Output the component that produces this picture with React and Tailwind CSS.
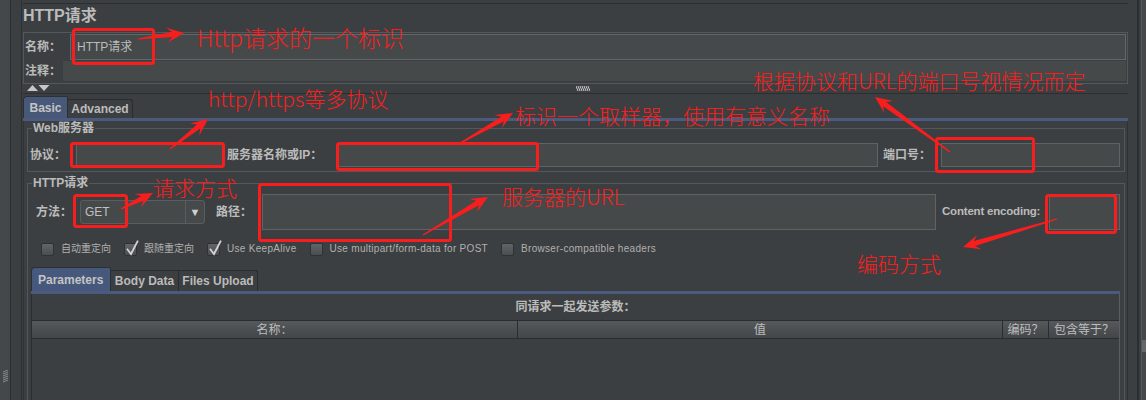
import React from 'react';

const RED = '#f81e1e';

function arrowPoints(t, p, headLen = 17, headHalf = 7.5, shaftHalf = 2.6) {
  const dx = p[0] - t[0];
  const dy = p[1] - t[1];
  const len = Math.hypot(dx, dy);
  const ux = dx / len;
  const uy = dy / len;
  const nx = -uy;
  const ny = ux;
  const jx = p[0] - ux * (headLen - 5);
  const jy = p[1] - uy * (headLen - 5);
  const bx = p[0] - ux * headLen;
  const by = p[1] - uy * headLen;
  const pts = [
    [t[0] + nx * 0.6, t[1] + ny * 0.6],
    [jx + nx * shaftHalf, jy + ny * shaftHalf],
    [bx + nx * headHalf, by + ny * headHalf],
    [p[0], p[1]],
    [bx - nx * headHalf, by - ny * headHalf],
    [jx - nx * shaftHalf, jy - ny * shaftHalf],
    [t[0] - nx * 0.6, t[1] - ny * 0.6],
  ];
  return pts.map((q) => `${q[0].toFixed(1)},${q[1].toFixed(1)}`).join(' ');
}

const ARROWS = [
  [[138, 39], [184, 33]],
  [[170, 149], [208, 119]],
  [[457, 145], [513, 113]],
  [[950, 152], [875, 97]],
  [[121, 209], [153, 193]],
  [[423, 235], [488, 197]],
  [[1057, 219], [963, 247]],
];

const BOXES = [
  [72, 28, 155, 65],
  [70, 142, 225, 168],
  [336, 142, 539, 171],
  [935, 137, 1035, 173],
  [73, 194, 128, 228],
  [258, 183, 452, 242],
  [1045, 194, 1117, 234],
];

function Checkbox({ checked, label, latin }) {
  return (
    <div className="flex items-center ml-[13px]">
      <span className="relative w-[13px] h-[13px] shrink-0 rounded-[2px] border border-[#2f3234] bg-linear-to-b from-[#626567] to-[#4b4e50]">
        {checked && (
          <svg className="absolute left-[0px] top-[-4px]" width="15" height="16" viewBox="0 0 15 16">
            <path d="M2.5 9.5 L6 14 L12.5 1.5" fill="none" stroke="#d4d4d4" strokeWidth="1.8" strokeLinecap="square" />
          </svg>
        )}
      </span>
      <span
        className={
          latin
            ? 'ml-[7px] text-[10px] leading-none text-[#b0b0b0] whitespace-nowrap tracking-[0.3px]'
            : 'ml-[7px] text-[10px] leading-none text-[#b0b0b0] whitespace-nowrap'
        }
      >
        {label}
      </span>
    </div>
  );
}

const NOTE = "absolute leading-none text-[#f81e1e] font-light font-['Noto_Sans_CJK_SC',sans-serif] whitespace-nowrap";

export default function App() {
  return (
    <div className="relative w-[1146px] h-[400px] overflow-hidden bg-[#3c3f41] flex font-['Liberation_Sans','Noto_Sans_CJK_SC',sans-serif]">
      {/* left strip */}
      <div className="w-[10px] h-[400px] bg-[#45484a] shrink-0 flex flex-col">
        <svg className="mt-[370px] ml-[3px]" width="6" height="13" viewBox="0 0 6 13">
          {[0, 2, 4, 6, 8, 10].map((y) => (
            <path key={y} d={`M0 ${y + 2} L5 ${y}`} stroke="#9a9d9f" strokeWidth="0.8" />
          ))}
        </svg>
      </div>
      <div className="w-[1px] h-[400px] bg-[#2b2d2f] shrink-0" />
      <div className="w-[10px] shrink-0" />
      <div className="w-[1px] h-[400px] bg-[#2e3032] shrink-0" />
      <div className="w-[1px] shrink-0" />

      {/* main column */}
      <div className="w-[1105px] h-[400px] shrink-0 flex flex-col">
        <div className="h-[3px] shrink-0" />
        <div className="h-[29px] shrink-0 border-t border-[#2c2e30] pt-[2px] text-[16px] font-bold leading-[20px] text-[#bbbbbb]">
          HTTP请求
        </div>

        {/* name / comment box */}
        <div className="h-[52px] shrink-0 border border-[#55585a] flex flex-col">
          <div className="h-[27px] flex items-start">
            <div className="w-[46px] h-[27px] pl-[1px] flex items-center text-[12px] font-bold text-[#bbbbbb]">名称：</div>
            <div className="flex-1 mr-[1px] mt-[1px] h-[26px] bg-[#45494a] border border-[#646769] flex items-center pl-[6px] text-[12px] text-[#bbbbbb]">
              HTTP请求
            </div>
          </div>
          <div className="h-[23px] flex items-start">
            <div className="w-[39px] h-[22px] pl-[1px] flex items-center text-[12px] font-bold text-[#bbbbbb]">注释：</div>
            <div className="flex-1 mr-[1px] mt-[1px] h-[20px] bg-[#45494a]" />
          </div>
        </div>

        {/* splitter */}
        <div className="h-[10px] shrink-0 border-b border-[#2c2e30] flex items-start">
          <svg className="ml-[4px] mt-[1px]" width="23" height="7" viewBox="0 0 23 7">
            <path d="M0 6 L5.5 0 L11 6 Z" fill="#c6c6c6" />
            <path d="M11.5 0 L22.5 0 L17 6 Z" fill="#c6c6c6" />
          </svg>
          <svg className="ml-[526px] mt-[2px]" width="14" height="5" viewBox="0 0 14 5">
            {[0, 2, 4, 6, 8, 10, 12].map((x) => (
              <path key={x} d={`M${x} 0 L${x + 2} 5`} stroke="#d8d8d8" strokeWidth="0.9" />
            ))}
          </svg>
        </div>

        {/* Basic / Advanced tabs */}
        <div className="h-[2px] shrink-0" />
        <div className="h-[22px] shrink-0 flex items-end">
          <div className="w-[45px] h-[22px] bg-[#485879] border border-b-0 border-[#2d3033] rounded-tl-[4px] rounded-tr-[2px] flex items-center justify-center text-[12px] font-bold text-[#c4c4c4]">
            Basic
          </div>
          <div className="w-[65px] h-[19px] border border-b-0 border-l-0 border-[#2a2c2e] rounded-tr-[3px] flex items-center justify-center text-[12px] font-bold text-[#bbbbbb]">
            Advanced
          </div>
        </div>
        <div className="h-[3px] shrink-0 bg-[#4a5b7e]" />

        {/* tab panel */}
        <div className="flex-1 min-h-0 border-x border-[#2f3234] pl-[3px] pr-[2px] flex flex-col">
          {/* Web server group */}
          <fieldset className="border border-[#55585a] min-w-0">
            <legend className="ml-[4px] px-[1px] text-[12px] font-bold leading-[14px] text-[#bbbbbb]">Web服务器</legend>
            <div className="mt-[8px] mb-[4px] h-[24px] flex items-center text-[12px] font-bold text-[#bbbbbb]">
              <div className="w-[48px] pl-[2px] whitespace-nowrap">协议：</div>
              <div className="w-[147px] h-[24px] bg-[#45494a] border border-[#5f6365]" />
              <div className="w-[114px] pl-[4px] whitespace-nowrap">服务器名称或IP：</div>
              <div className="flex-1 h-[24px] bg-[#45494a] border border-[#5f6365]" />
              <div className="w-[63px] pl-[5px] whitespace-nowrap">端口号：</div>
              <div className="w-[179px] h-[24px] bg-[#45494a] border border-[#5f6365]" />
              <div className="w-[4px]" />
            </div>
          </fieldset>

          {/* HTTP request group */}
          <fieldset className="mt-[4px] border border-[#55585a] min-w-0 flex-1">
            <legend className="ml-[4px] px-[1px] text-[12px] font-bold leading-[14px] text-[#bbbbbb]">HTTP请求</legend>
            <div className="mt-[4px] h-[36px] flex items-center text-[12px] font-bold text-[#bbbbbb]">
              <div className="w-[52px] pl-[8px] whitespace-nowrap">方法：</div>
              <div className="w-[125px] h-[24px] bg-[#45494a] border border-[#5a5d5f] rounded-[3px] flex items-center">
                <span className="flex-1 pl-[4px] font-normal text-[12px] text-[#c0c0c0]">GET</span>
                <span className="w-[19px] h-[22px] border-l border-[#5a5d5f] flex items-center justify-center text-[11px] text-[#cfcfcf]">▼</span>
              </div>
              <div className="w-[57px] pl-[11px] whitespace-nowrap">路径：</div>
              <div className="flex-1 h-[36px] bg-[#45494a] border border-[#5f6365]" />
              <div className="w-[113px] pl-[6px] whitespace-nowrap text-[11.5px] tracking-[-0.2px]">Content encoding:</div>
              <div className="w-[71px] h-[36px] bg-[#45494a] border border-[#5f6365]" />
              <div className="w-[4px]" />
            </div>

            <div className="mt-[12px] h-[14px] flex items-center">
              <Checkbox label="自动重定向" />
              <Checkbox label="跟随重定向" checked />
              <Checkbox label="Use KeepAlive" checked latin />
              <Checkbox label="Use multipart/form-data for POST" latin />
              <Checkbox label="Browser-compatible headers" latin />
            </div>

            {/* Parameters area */}
            <div className="mt-[11px] ml-[3px] mr-[4px] flex flex-col">
              <div className="h-[24px] flex items-end">
                <div className="w-[80px] h-[24px] bg-[#46587b] border border-b-0 border-[#2d3033] rounded-tl-[4px] rounded-tr-[2px] flex items-center pl-[6px] text-[12px] font-bold text-[#c4c4c4]">
                  Parameters
                </div>
                <div className="w-[68px] h-[21px] border border-b-0 border-l-0 border-[#2a2c2e] flex items-center justify-center text-[12px] font-bold text-[#bbbbbb]">
                  Body Data
                </div>
                <div className="w-[79px] h-[21px] border border-b-0 border-l-0 border-[#2a2c2e] rounded-tr-[3px] flex items-center justify-center text-[12px] font-bold text-[#bbbbbb]">
                  Files Upload
                </div>
              </div>
              <div className="h-[3px] bg-[#4a5b7e]" />
              <div className="border-l border-[#2b2d2f] border-r border-r-[#5b5e60] flex flex-col">
                <div className="h-[26px] flex items-center justify-center text-[12px] font-bold text-[#bbbbbb]">同请求一起发送参数：</div>
                <div className="h-[19px] border-y border-[#2a2c2e] bg-linear-to-b from-[#55595c] to-[#434648] flex text-[12px] text-[#bdbdbd]">
                  <div className="w-[486px] border-r border-[#2a2c2e] flex items-center justify-center">名称：</div>
                  <div className="w-[485px] border-r border-[#2a2c2e] flex items-center justify-center">值</div>
                  <div className="w-[46px] border-r border-[#2a2c2e] flex items-center justify-center">编码？</div>
                  <div className="flex-1 flex items-center justify-center whitespace-nowrap">包含等于？</div>
                </div>
                <div className="h-[80px] bg-[#3c3f41]" />
              </div>
            </div>
          </fieldset>
        </div>
      </div>

      {/* right edge */}
      <div className="w-[9px] shrink-0" />
      <div className="w-[2px] h-[400px] bg-[#2c2e30] shrink-0" />
      <div className="w-[2px] shrink-0" />
      <div className="w-[1px] h-[400px] bg-[#56595b] shrink-0" />
      <div className="w-[4px] h-[400px] bg-[#45484a] shrink-0 flex flex-col">
        <div className="mt-[340px] h-[12px] bg-[#65686a]" />
      </div>

      {/* red annotations overlay */}
      <svg className="absolute left-0 top-0 pointer-events-none" width="1146" height="400" viewBox="0 0 1146 400">
        {BOXES.map(([x1, y1, x2, y2], i) => (
          <rect key={i} x={x1 + 1.5} y={y1 + 1.5} width={x2 - x1 - 3} height={y2 - y1 - 3} rx="2" fill="none" stroke={RED} strokeWidth="3" />
        ))}
        {ARROWS.map(([t, p], i) => (
          <polygon key={i} points={arrowPoints(t, p)} fill={RED} />
        ))}
      </svg>
      <span className={`${NOTE} left-[197px] top-[26px] text-[23px]`}>Http请求的一个标识</span>
      <span className={`${NOTE} left-[208px] top-[88px] text-[21px]`}>http/https等多协议</span>
      <span className={`${NOTE} left-[515px] top-[105px] text-[21px]`}>标识一个取样器，使用有意义名称</span>
      <span className={`${NOTE} left-[753px] top-[70px] text-[21px]`}>根据协议和URL的端口号视情况而定</span>
      <span className={`${NOTE} left-[153px] top-[177px] text-[21px]`}>请求方式</span>
      <span className={`${NOTE} left-[502px] top-[186px] text-[21px]`}>服务器的URL</span>
      <span className={`${NOTE} left-[857px] top-[253px] text-[21px]`}>编码方式</span>
    </div>
  );
}
